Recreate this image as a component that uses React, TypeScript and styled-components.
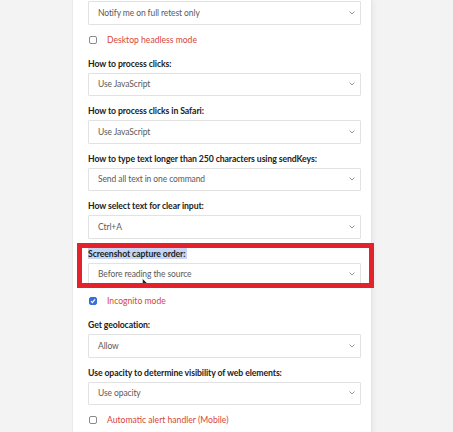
import React from "react";
import styled, { createGlobalStyle } from "styled-components";

const Global = createGlobalStyle`
  html, body { margin: 0; padding: 0; background: #f3f3f3; }
  body { font-family: Lato, "Open Sans", sans-serif; overflow: hidden; }
`;

const Page = styled.div`
  height: 432px;
  overflow: hidden;
`;

const Panel = styled.div`
  margin-left: 72px;
  width: 283px;
  min-height: 432px;
  background: #ffffff;
  border-left: 1px solid #e9e9e9;
  border-right: 1px solid #e4e4e4;
  box-shadow: 3px 0 4px rgba(0, 0, 0, 0.03);
  padding: 1px 0 0 15px;
  display: flex;
  flex-direction: column;
  gap: 8px;
`;

const Field = styled.div`
  position: relative;
  display: flex;
  flex-direction: column;
  gap: 2px;
  width: 273px;
`;

const Label = styled.div`
  font-size: 8.7px;
  line-height: 14px;
  font-weight: 700;
  letter-spacing: -0.1px;
  color: #222222;
`;

const Mark = styled.span`
  background: #c5d5f3;
  padding-right: 2px;
`;

const Select = styled.div`
  box-sizing: border-box;
  height: 23.5px;
  border: 1px solid #e2e2e2;
  border-radius: 1px;
  background: #fff;
  display: flex;
  align-items: center;
  justify-content: space-between;
  padding: 0 4px 0 9px;
  font-size: 8.5px;
  letter-spacing: -0.1px;
  color: #5a5a5a;
`;

const Chevron = styled.svg`
  width: 6px;
  height: 4px;
  margin-right: 1px;
`;

const CheckRow = styled.div`
  display: flex;
  align-items: center;
  height: 14px;
  padding-bottom: 2px;
  gap: 10px;
  padding-left: 1px;
`;

const Box = styled.span<{ $checked?: boolean }>`
  box-sizing: border-box;
  width: 8px;
  height: 8px;
  border-radius: 2px;
  border: 1px solid ${(p) => (p.$checked ? "#3a6fd8" : "#8a8a8a")};
  background: ${(p) => (p.$checked ? "#3a6fd8" : "#fff")};
  display: flex;
  align-items: center;
  justify-content: center;
`;

const CheckText = styled.span`
  font-size: 8.6px;
  color: #d8453a;
`;

const Highlight = styled.div`
  position: absolute;
  left: -11px;
  top: -4px;
  width: 297px;
  height: 45px;
  box-sizing: border-box;
  border: 5px solid #e3222b;
  pointer-events: none;
`;

const Cursor = styled.svg`
  position: absolute;
  left: 54px;
  top: 31px;
  width: 7px;
  height: 10px;
`;

const Arrow = () => (
  <Chevron viewBox="0 0 6 4">
    <path d="M0.5 0.5 L3 3 L5.5 0.5" fill="none" stroke="#8a8a8a" strokeWidth="0.9" />
  </Chevron>
);

const Dropdown = ({ value }: { value: string }) => (
  <Select>
    <span>{value}</span>
    <Arrow />
  </Select>
);

const Check = ({ label, checked }: { label: string; checked?: boolean }) => (
  <CheckRow>
    <Box $checked={checked}>
      {checked && (
        <svg width="6" height="6" viewBox="0 0 6 6">
          <path d="M1 3.2 L2.4 4.6 L5 1.4" fill="none" stroke="#fff" strokeWidth="1.2" />
        </svg>
      )}
    </Box>
    <CheckText>{label}</CheckText>
  </CheckRow>
);

export default function App() {
  return (
    <Page>
      <Global />
      <Panel>
        <Field>
          <Dropdown value="Notify me on full retest only" />
        </Field>
        <Check label="Desktop headless mode" />
        <Field>
          <Label>How to process clicks:</Label>
          <Dropdown value="Use JavaScript" />
        </Field>
        <Field>
          <Label>How to process clicks in Safari:</Label>
          <Dropdown value="Use JavaScript" />
        </Field>
        <Field>
          <Label>How to type text longer than 250 characters using sendKeys:</Label>
          <Dropdown value="Send all text in one command" />
        </Field>
        <Field>
          <Label>How select text for clear input:</Label>
          <Dropdown value="Ctrl+A" />
        </Field>
        <Field>
          <Label>
            <Mark>Screenshot capture order:</Mark>
          </Label>
          <Dropdown value="Before reading the source" />
          <Cursor viewBox="0 0 7 10">
            <path d="M0.5 0.5 L0.5 8 L2.3 6.3 L3.6 9.3 L4.8 8.8 L3.5 5.9 L6 5.9 Z" fill="#222" stroke="#fff" strokeWidth="0.5" />
          </Cursor>
          <Highlight />
        </Field>
        <Check label="Incognito mode" checked />
        <Field>
          <Label>Get geolocation:</Label>
          <Dropdown value="Allow" />
        </Field>
        <Field>
          <Label>Use opacity to determine visibility of web elements:</Label>
          <Dropdown value="Use opacity" />
        </Field>
        <Check label="Automatic alert handler (Mobile)" />
      </Panel>
    </Page>
  );
}
